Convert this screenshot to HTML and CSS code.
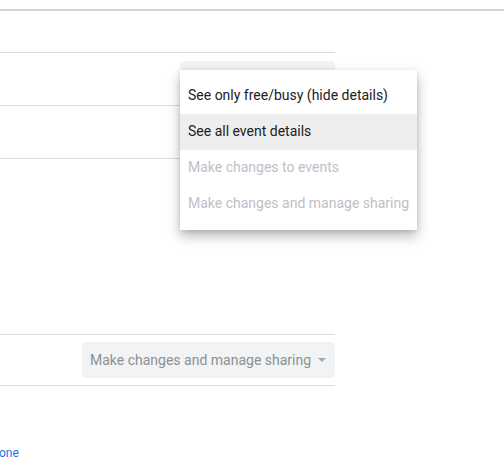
FILE: index.html
```html
<!DOCTYPE html>
<html lang="en">

<head>
    <meta charset="UTF-8">
    <meta name="viewport" content="width=device-width, initial-scale=1.0">
    <title>Share with specific people</title>
    <link rel="stylesheet" href="styles.css">
</head>

<body>
    <div class="topbar"></div>

    <div class="people">
        <div class="row row-first"></div>
        <div class="row">
            <div class="select">
                <span class="select-label">See all event details</span>
                <span class="caret"></span>
            </div>
        </div>
        <div class="row"></div>
    </div>

    <div class="spacer"></div>

    <div class="people">
        <div class="row row-last">
            <div class="select select-wide">
                <span class="select-label">Make changes and manage sharing</span>
                <span class="caret"></span>
            </div>
        </div>
    </div>

    <a class="more" href="#">one</a>

    <!-- permission menu, opened from the second row -->
    <ul class="menu">
        <li>See only free/busy (hide details)</li>
        <li class="active">See all event details</li>
        <li class="disabled">Make changes to events</li>
        <li class="disabled">Make changes and manage sharing</li>
    </ul>
</body>

</html>
```

FILE: styles.css
```css
* {
    box-sizing: border-box;
}

body {
    margin: 0;
    font-family: Roboto, 'Liberation Sans', Arial, sans-serif;
    font-size: 14px;
    color: #202124;
    background-color: #fff;
    overflow: hidden;
}

.topbar {
    height: 11px;
    border-bottom: 2px solid #d2d2d2;
}

.people {
    width: 335px;
}

.row {
    display: flex;
    align-items: center;
    justify-content: flex-end;
    height: 53px;
    border-bottom: 1px solid #dadce0;
}

.row-first {
    height: 42px;
}

.row-last {
    height: 52px;
    border-top: 1px solid #dadce0;
}

.spacer {
    height: 175px;
}

.select {
    display: flex;
    align-items: center;
    justify-content: space-between;
    width: 155px;
    height: 36px;
    padding: 0 9px 0 8px;
    background-color: #f1f3f4;
    border-radius: 4px;
    color: #8c9094;
}

.select-wide {
    width: 253px;
    margin-bottom: 1px;
}

.caret {
    width: 0;
    height: 0;
    margin-top: 1px;
    border-left: 4px solid transparent;
    border-right: 4px solid transparent;
    border-top: 4px solid #a4a8ac;
}

.more {
    display: block;
    margin: 60px 0 0 -1px;
    font-size: 12px;
    line-height: 14px;
    color: #1a73e8;
    text-decoration: none;
}

.menu {
    position: absolute;
    top: 70px;
    left: 180px;
    width: 237px;
    margin: 0;
    padding: 8px 0;
    list-style: none;
    background-color: #fff;
    box-shadow: 0 6px 12px rgba(0, 0, 0, 0.28), 0 1px 4px rgba(0, 0, 0, 0.12);
}

.menu li {
    height: 36px;
    line-height: 35px;
    padding-left: 8px;
    white-space: nowrap;
}

.menu .active {
    background-color: #eeeeee;
}

.menu .disabled {
    color: #bdc1c6;
}
```
